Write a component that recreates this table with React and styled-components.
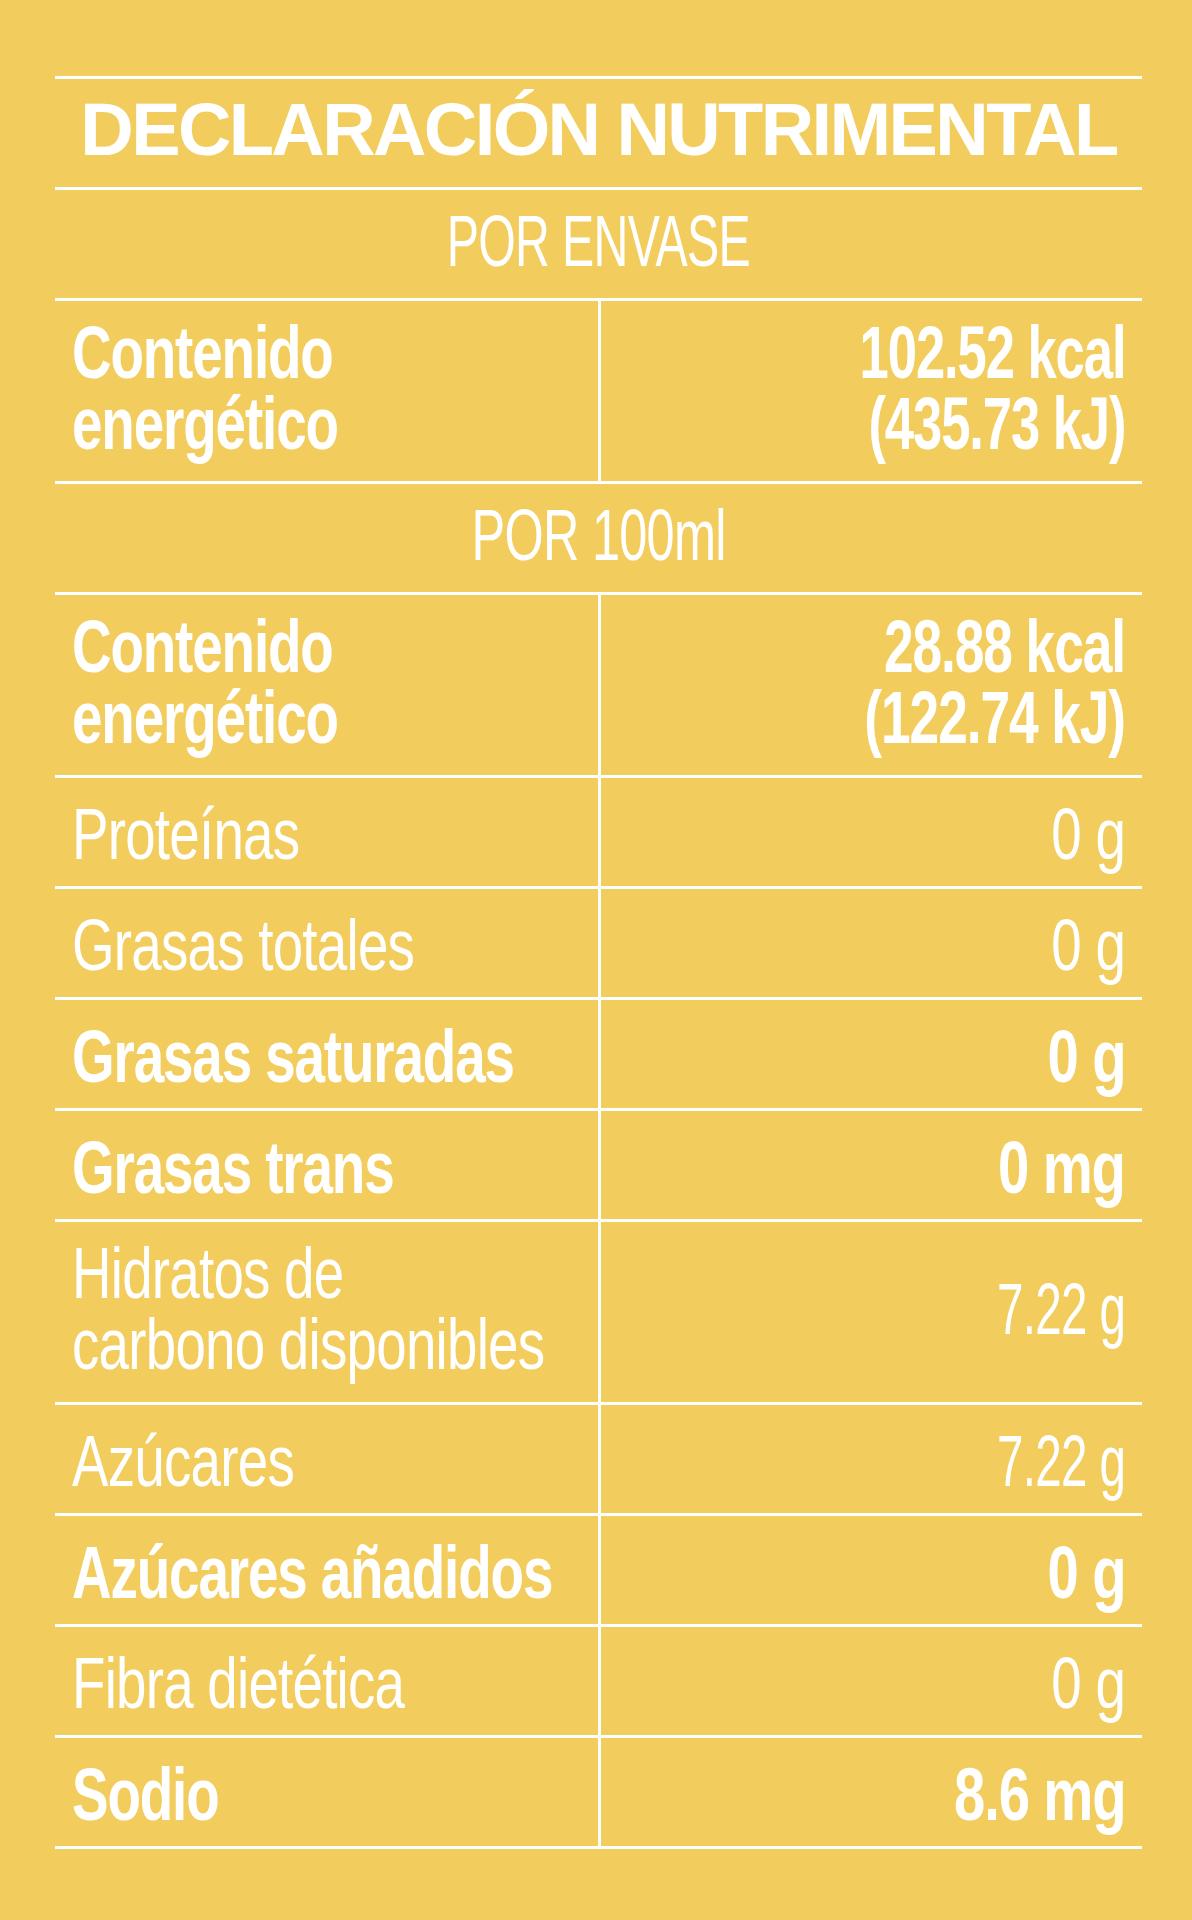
import React from 'react';
import styled, { createGlobalStyle } from 'styled-components';

const GlobalStyle = createGlobalStyle`
  html, body {
    margin: 0;
    padding: 0;
    background: #f2cd5e;
  }

  body {
    font-family: "Liberation Sans", Arial, sans-serif;
    color: #ffffff;
  }
`;

// Energy rows (two lines on each side)
const perPackage = {
  label: ['Contenido', 'energético'],
  value: ['102.52 kcal', '(435.73 kJ)']
};

const per100Energy = {
  label: ['Contenido', 'energético'],
  value: ['28.88 kcal', '(122.74 kJ)']
};

// Nutrients per 100ml
const nutrients = [
  { label: ['Proteínas'], value: '0 g' },
  { label: ['Grasas totales'], value: '0 g' },
  { label: ['Grasas saturadas'], value: '0 g', bold: true },
  { label: ['Grasas trans'], value: '0 mg', bold: true },
  { label: ['Hidratos de', 'carbono disponibles'], value: '7.22 g', tall: true, valueScale: 0.66 },
  { label: ['Azúcares'], value: '7.22 g', valueScale: 0.66 },
  { label: ['Azúcares añadidos'], value: '0 g', bold: true },
  { label: ['Fibra dietética'], value: '0 g' },
  { label: ['Sodio'], value: '8.6 mg', bold: true }
];

const Lines = ({ lines }) =>
  lines.map((line, i) => (
    <React.Fragment key={i}>
      {i > 0 && <br />}
      {line}
    </React.Fragment>
  ));

const App = () => {
  return (
    <Page>
      <GlobalStyle />
      <Table>
        <FullRow>
          <Title>DECLARACIÓN NUTRIMENTAL</Title>
        </FullRow>

        <FullRow>
          <Squeeze $origin="center" $scale={0.67}>POR ENVASE</Squeeze>
        </FullRow>

        <SplitRow $tall>
          <LabelCell $tall>
            <Squeeze $bold>
              <Lines lines={perPackage.label} />
            </Squeeze>
          </LabelCell>
          <ValueCell $tall>
            <Squeeze $bold $origin="right" $scale={0.71}>
              <Lines lines={perPackage.value} />
            </Squeeze>
          </ValueCell>
        </SplitRow>

        <FullRow>
          <Squeeze $origin="center" $scale={0.7}>POR 100ml</Squeeze>
        </FullRow>

        <SplitRow $tall>
          <LabelCell $tall>
            <Squeeze $bold>
              <Lines lines={per100Energy.label} />
            </Squeeze>
          </LabelCell>
          <ValueCell $tall>
            <Squeeze $bold $origin="right" $scale={0.72}>
              <Lines lines={per100Energy.value} />
            </Squeeze>
          </ValueCell>
        </SplitRow>

        {nutrients.map(item => (
          <SplitRow key={item.label.join(' ')} $tall={item.tall}>
            <LabelCell $tall={item.tall}>
              <Squeeze $bold={item.bold}>
                <Lines lines={item.label} />
              </Squeeze>
            </LabelCell>
            <ValueCell $tall={item.tall}>
              <Squeeze $bold={item.bold} $origin="right" $scale={item.valueScale || 0.76}>
                {item.value}
              </Squeeze>
            </ValueCell>
          </SplitRow>
        ))}
      </Table>
    </Page>
  );
};

const Page = styled.div`
  min-height: 1920px;
  background: #f2cd5e;
  padding: 76px 50px 0 55px;
  box-sizing: border-box;
`;

const Table = styled.div`
  width: 1087px;
  border-top: 3px solid #ffffff;
`;

const FullRow = styled.div`
  height: 111px;
  box-sizing: border-box;
  border-bottom: 3px solid #ffffff;
  display: flex;
  align-items: center;
  justify-content: center;
  padding-bottom: 6px;
`;

const Title = styled.h1`
  margin: 0;
  font-size: 74px;
  font-weight: 700;
  letter-spacing: -2.6px;
  line-height: 1;
  white-space: nowrap;
`;

const SplitRow = styled.div`
  display: grid;
  grid-template-columns: 546px 1fr;
  height: ${({ $tall }) => ($tall ? '183px' : '111px')};
  box-sizing: border-box;
  border-bottom: 3px solid #ffffff;
`;

const LabelCell = styled.div`
  min-width: 0;
  display: flex;
  align-items: center;
  padding: ${({ $tall }) => ($tall ? '0 0 6px 17px' : '4px 0 0 17px')};
  border-right: 3px solid #ffffff;
`;

const ValueCell = styled.div`
  min-width: 0;
  display: flex;
  align-items: center;
  justify-content: flex-end;
  padding: ${({ $tall }) => ($tall ? '0 17px 6px 0' : '4px 17px 0 0')};
  text-align: right;
`;

const Squeeze = styled.span`
  display: inline-block;
  white-space: nowrap;
  font-size: ${({ $bold }) => ($bold ? '74px' : '72px')};
  font-weight: ${({ $bold }) => ($bold ? 700 : 400)};
  letter-spacing: ${({ $bold }) => ($bold ? '-1.5px' : '-1px')};
  line-height: 71px;
  transform: scaleX(${({ $scale, $bold }) => $scale || ($bold ? 0.74 : 0.76)});
  transform-origin: ${({ $origin }) => $origin || 'left'} center;
`;

export default App;
